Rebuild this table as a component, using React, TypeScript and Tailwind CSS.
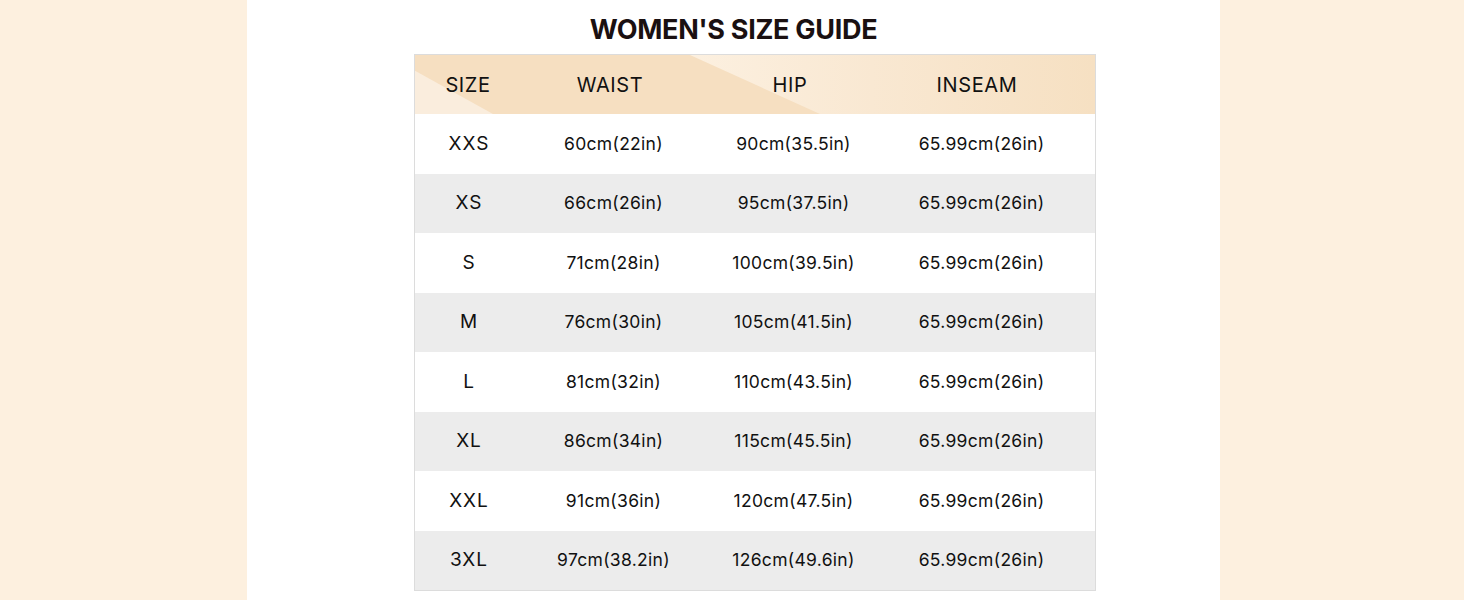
import React from 'react';

const rows = [
  ['XXS', '60cm(22in)', '90cm(35.5in)', '65.99cm(26in)'],
  ['XS', '66cm(26in)', '95cm(37.5in)', '65.99cm(26in)'],
  ['S', '71cm(28in)', '100cm(39.5in)', '65.99cm(26in)'],
  ['M', '76cm(30in)', '105cm(41.5in)', '65.99cm(26in)'],
  ['L', '81cm(32in)', '110cm(43.5in)', '65.99cm(26in)'],
  ['XL', '86cm(34in)', '115cm(45.5in)', '65.99cm(26in)'],
  ['XXL', '91cm(36in)', '120cm(47.5in)', '65.99cm(26in)'],
  ['3XL', '97cm(38.2in)', '126cm(49.6in)', '65.99cm(26in)'],
];

const headers = ['SIZE', 'WAIST', 'HIP', 'INSEAM'];

// soft diagonal light streaks behind the header row
const HeaderBackdrop = () => (
  <svg className="absolute inset-0 h-full w-full" viewBox="0 0 680 60" preserveAspectRatio="none">
    <defs>
      <linearGradient id="band" x1="0" y1="0" x2="1" y2="0">
        <stop offset="0" stopColor="#fcf0e0" />
        <stop offset="0.45" stopColor="#f9e8d2" />
        <stop offset="1" stopColor="#f6e0c2" />
      </linearGradient>
    </defs>
    <rect width="680" height="60" fill="#f6dfc1" />
    <polygon points="275,0 680,0 680,60 405,60" fill="url(#band)" />
    <polygon points="0,16 0,60 78,60" fill="#faeddd" />
  </svg>
);

export default function App() {
  return (
    <div className="flex min-h-screen bg-[#fdf0df] font-['Inter',sans-serif] text-[#111]">
      <div className="w-[247px] shrink-0" />
      <div className="w-[973px] shrink-0 bg-white">
        <div className="flex h-[54px] items-center justify-center pt-[6px]">
          <h1 className="text-[27px] font-bold tracking-[-0.3px] text-[#1a1011]">WOMEN'S SIZE GUIDE</h1>
        </div>
        <div className="ml-[167px] w-[682px] border border-[#dcdcdc]">
          <div className="relative h-[59px]">
            <HeaderBackdrop />
            <div className="relative grid h-full grid-cols-[106px_178px_182px_192px] items-center text-center text-[20px] tracking-[0.6px]">
              {headers.map((h) => (
                <div key={h}>{h}</div>
              ))}
            </div>
          </div>
          {rows.map((r, i) => (
            <div
              key={r[0]}
              className={`grid h-[59.5px] grid-cols-[106px_178px_182px_192px] items-center text-center ${
                i % 2 === 1 ? 'bg-[#ececec]' : 'bg-white'
              }`}
            >
              <div className="pl-[2px] text-[19px] tracking-[1px]">{r[0]}</div>
              <div className="pl-[7px] text-[17.5px] tracking-[0.3px]">{r[1]}</div>
              <div className="pl-[7px] text-[17.5px] tracking-[0.3px]">{r[2]}</div>
              <div className="pl-[9px] text-[17.5px] tracking-[0.3px]">{r[3]}</div>
            </div>
          ))}
        </div>
      </div>
      <div className="flex-1" />
    </div>
  );
}
